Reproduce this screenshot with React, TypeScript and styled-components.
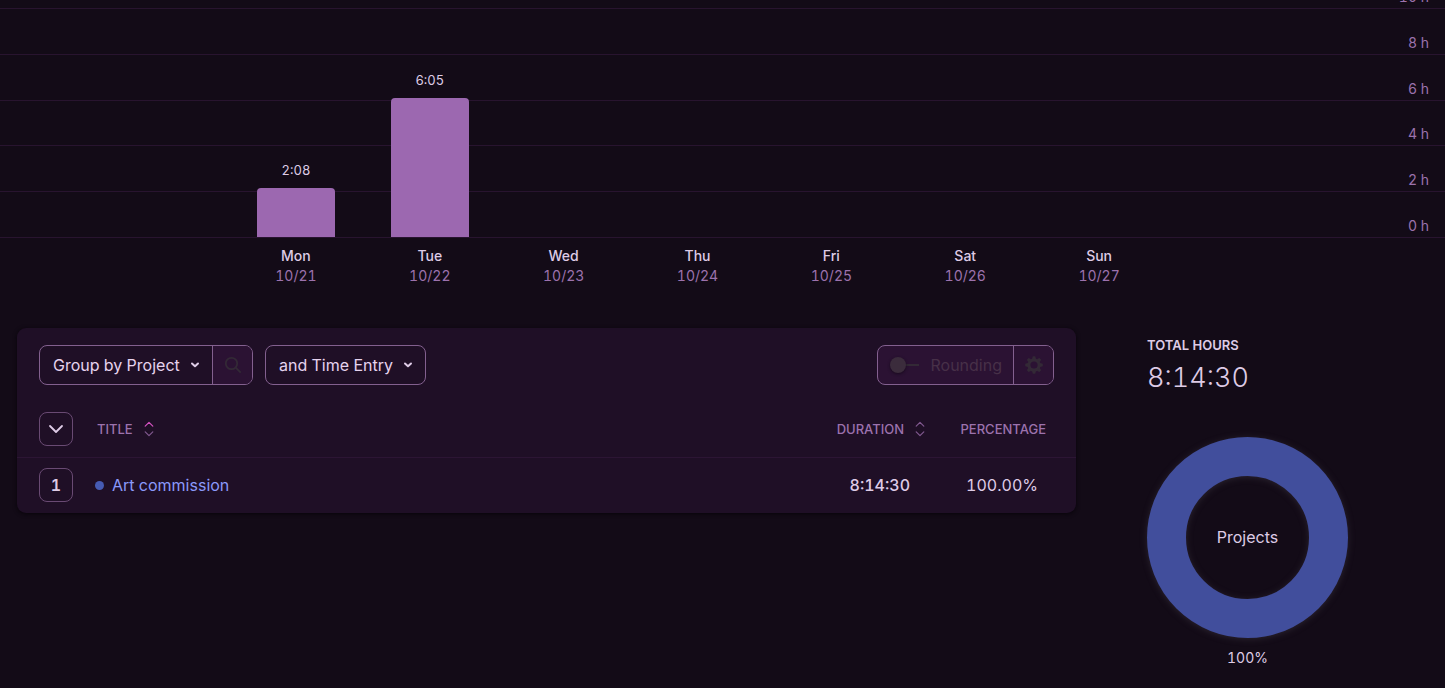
import React from "react";
import styled, { createGlobalStyle } from "styled-components";

const Global = createGlobalStyle`
  *, *::before, *::after { box-sizing: border-box; }
  body {
    margin: 0;
    background: #130b17;
    color: #decbe6;
    font-family: Inter, "Liberation Sans", sans-serif;
    font-size: 16px;
    line-height: 20px;
    font-feature-settings: "tnum";
  }
  button, select { font: inherit; color: inherit; margin: 0; }
`;

const Page = styled.div`
  overflow-x: hidden;
`;

const Chart = styled.section`
  position: relative;
  height: 238px;
  overflow: hidden;
`;

const Grid = styled.div`
  height: 100%;
  display: flex;
  flex-direction: column;
`;

const GridRow = styled.div<{ $clipped?: boolean }>`
  flex: ${(p) => (p.$clipped ? "0 0 9px" : "1 1 0")};
  min-height: 0;
  height: ${(p) => (p.$clipped ? "9px" : "auto")};
  display: flex;
  flex-direction: column;
  align-items: flex-end;
  justify-content: flex-end;
  padding: 0 16px 1px 0;
  border-bottom: 1px solid #28142f;
  color: #9c72ad;
  font-size: 14px;
  white-space: nowrap;
`;

const Bars = styled.div`
  position: absolute;
  inset: 9px 0 1px 0;
  display: flex;
  padding: 0 279px 0 229px;
`;

const BarSlot = styled.div`
  flex: 1 1 0;
  display: flex;
  flex-direction: column;
  align-items: center;
  justify-content: flex-end;
  font-size: 13px;
`;

const BarValue = styled.span`
  margin-bottom: 8px;
`;

const Bar = styled.div`
  width: 78px;
  border-radius: 4px 4px 0 0;
  background: #9c68b0;
`;

const Days = styled.div`
  display: flex;
  padding: 8px 279px 0 229px;
  font-size: 14px;
`;

const Day = styled.div`
  flex: 1 1 0;
  text-align: center;
`;

const DayName = styled.div`
  font-weight: 500;
`;

const DayDate = styled.div`
  color: #9c72ad;
`;

const Report = styled.main`
  display: grid;
  grid-template-columns: minmax(0, 1fr) 201px;
  gap: 71px;
  align-items: start;
  padding: 42px 97px 0 17px;
`;

const Card = styled.section`
  border-radius: 9px;
  background: #1f0f26;
  box-shadow: 0 1px 4px #08040a;
`;

const Toolbar = styled.div`
  display: flex;
  gap: 12px;
  padding: 17px 22px 16px;
`;

const Group = styled.div<{ $end?: boolean }>`
  display: flex;
  height: 40px;
  margin-left: ${(p) => (p.$end ? "auto" : "0")};
  border: 1px solid #83608f;
  border-radius: 8px;
  background: ${(p) => (p.$end ? "#2b1233" : "transparent")};
  overflow: hidden;
`;

const SelectWrap = styled.label`
  position: relative;
  display: flex;
  align-items: center;

  svg {
    position: absolute;
    right: 12px;
    pointer-events: none;
  }
`;

const Select = styled.select<{ $width: number }>`
  appearance: none;
  width: ${(p) => p.$width}px;
  height: 100%;
  padding: 0 30px 0 13px;
  border: 0;
  background: transparent;
  color: #e6d3ee;
`;

const IconButton = styled.button`
  display: flex;
  align-items: center;
  justify-content: center;
  width: 40px;
  padding: 0;
  border: 0;
  border-left: 1px solid #83608f;
  background: #2b1233;
  color: #332936;
`;

const RoundingLabel = styled.label`
  display: flex;
  align-items: center;
  gap: 11px;
  padding: 0 11px 0 12px;
  color: #473048;
`;

const Switch = styled.input`
  appearance: none;
  position: relative;
  width: 29px;
  height: 16px;
  margin: 0;
  background: linear-gradient(#332936, #332936) right center / 16px 2px no-repeat;

  &::before {
    content: "";
    display: block;
    width: 16px;
    height: 16px;
    border-radius: 50%;
    background: #3b2c3c;
    box-shadow: 0 1px 3px #180a1d;
  }
`;

const Table = styled.table`
  width: 100%;
  border-collapse: collapse;
  table-layout: fixed;
`;

const Row = styled.tr`
  height: 56px;
  tbody & { border-top: 1px solid #2c1534; }
`;

const HeadCell = styled.th<{ $width?: number; $right?: boolean; $pad?: number; $indent?: boolean }>`
  width: ${(p) => (p.$width ? `${p.$width}px` : "auto")};
  padding: 0 ${(p) => p.$pad ?? 0}px 0 ${(p) => (p.$indent ? 2 : 0)}px;
  color: #9c72ad;
  font-size: 13px;
  font-weight: 500;
  text-align: ${(p) => (p.$right ? "right" : "left")};
`;

const Cell = styled.td<{ $right?: boolean; $pad?: number; $strong?: boolean }>`
  padding: 0 ${(p) => p.$pad ?? 0}px 0 0;
  text-align: ${(p) => (p.$right ? "right" : "left")};
  font-weight: ${(p) => (p.$strong ? 500 : 400)};
`;

const SortButton = styled.button`
  display: inline-flex;
  align-items: center;
  gap: 11px;
  padding: 0;
  border: 0;
  background: none;
  vertical-align: middle;
`;

const SquareButton = styled.button`
  display: flex;
  align-items: center;
  justify-content: center;
  width: 34px;
  height: 34px;
  margin-left: 22px;
  padding: 0;
  border: 1px solid #694a73;
  border-radius: 8px;
  background: transparent;
  color: #decbe6;
  font-size: 16px;
  font-weight: 600;
`;

const ProjectLink = styled.a`
  display: flex;
  align-items: center;
  gap: 8px;
  color: #8b99fa;
  text-decoration: none;

  &::before {
    content: "";
    width: 9px;
    height: 9px;
    border-radius: 50%;
    background: #465bb3;
  }
`;

const Summary = styled.aside`
  padding-top: 7px;
`;

const SummaryTitle = styled.h2`
  margin: 0;
  font-size: 13px;
  font-weight: 600;
`;

const Total = styled.p`
  margin: 5px 0 0;
  font-size: 27px;
  line-height: 36px;
  font-weight: 300;
`;

const Donut = styled.div`
  display: grid;
  place-items: center;
  width: 201px;
  height: 201px;
  margin-top: 41px;

  > * { grid-area: 1 / 1; }
  svg { overflow: visible; filter: drop-shadow(0 1px 3px #2b2430); }
`;

const DonutLabel = styled.span`
  padding-bottom: 2px;
`;

const Share = styled.p`
  margin: 10px 0 0;
  text-align: center;
  font-size: 14px;
`;

const Caret = () => (
  <svg width="10" height="8" viewBox="0 0 10 8" fill="none" stroke="currentColor" strokeWidth="2" strokeLinecap="round" strokeLinejoin="round" aria-hidden="true">
    <path d="M2 2.5 5 5.3 8 2.5" />
  </svg>
);

const SortIcon = ({ active }: { active?: boolean }) => (
  <svg width="10" height="16" viewBox="0 0 10 16" fill="none" strokeWidth="1.2" strokeLinecap="round" strokeLinejoin="round" aria-hidden="true">
    <path d="M1.2 5.2 5 1.4l3.8 3.8" stroke={active ? "#d452c0" : "#80588f"} />
    <path d="M1.2 10.8 5 14.6l3.8-3.8" stroke="#80588f" />
  </svg>
);

const gearTeeth = [0, 45, 90, 135, 180, 225, 270, 315];

const GearIcon = () => (
  <svg width="18" height="18" viewBox="-9 -9 18 18" aria-hidden="true">
    <circle r="5.1" fill="none" stroke="currentColor" strokeWidth="3" />
    {gearTeeth.map((angle) => (
      <path key={angle} d="M-2-6 -1.2-8.8h2.4L2-6z" fill="currentColor" transform={`rotate(${angle})`} />
    ))}
  </svg>
);

const days = [
  { name: "Mon", date: "10/21", hours: 2.13, label: "2:08" },
  { name: "Tue", date: "10/22", hours: 6.08, label: "6:05" },
  { name: "Wed", date: "10/23", hours: 0, label: "" },
  { name: "Thu", date: "10/24", hours: 0, label: "" },
  { name: "Fri", date: "10/25", hours: 0, label: "" },
  { name: "Sat", date: "10/26", hours: 0, label: "" },
  { name: "Sun", date: "10/27", hours: 0, label: "" },
];

export default function App() {
  return (
    <Page>
      <Global />
      <Chart aria-label="Hours per day">
        <Grid>
          <GridRow $clipped>10 h</GridRow>
          {[8, 6, 4, 2, 0].map((h) => (
            <GridRow key={h}>{h} h</GridRow>
          ))}
        </Grid>
        <Bars>
          {days.map((d) => (
            <BarSlot key={d.name}>
              {d.hours > 0 && (
                <>
                  <BarValue>{d.label}</BarValue>
                  <Bar style={{ height: `${d.hours * 10}%` }} />
                </>
              )}
            </BarSlot>
          ))}
        </Bars>
      </Chart>
      <Days>
        {days.map((d) => (
          <Day key={d.name}>
            <DayName>{d.name}</DayName>
            <DayDate>{d.date}</DayDate>
          </Day>
        ))}
      </Days>
      <Report>
        <Card>
          <Toolbar>
            <Group>
              <SelectWrap>
                <Select $width={172} aria-label="Group by">
                  <option>Group by Project</option>
                </Select>
                <Caret />
              </SelectWrap>
              <IconButton aria-label="Search" disabled>
                <svg width="18" height="18" viewBox="0 0 18 18" fill="none" stroke="currentColor" strokeWidth="1.8" aria-hidden="true">
                  <circle cx="7.5" cy="7.5" r="5.7" />
                  <path d="m11.7 11.7 5 5" />
                </svg>
              </IconButton>
            </Group>
            <Group>
              <SelectWrap>
                <Select $width={159} aria-label="Then group by">
                  <option>and Time Entry</option>
                </Select>
                <Caret />
              </SelectWrap>
            </Group>
            <Group $end>
              <RoundingLabel>
                <Switch type="checkbox" role="switch" disabled />
                Rounding
              </RoundingLabel>
              <IconButton aria-label="Rounding settings" disabled>
                <GearIcon />
              </IconButton>
            </Group>
          </Toolbar>
          <Table>
            <thead>
              <Row>
                <HeadCell $width={78}>
                  <SquareButton aria-label="Expand all">
                    <svg width="16" height="10" viewBox="0 0 16 10" fill="none" stroke="currentColor" strokeWidth="1.8" strokeLinecap="round" strokeLinejoin="round" aria-hidden="true">
                      <path d="M2 2l6 6 6-6" />
                    </svg>
                  </SquareButton>
                </HeadCell>
                <HeadCell $indent>
                  <SortButton>TITLE <SortIcon active /></SortButton>
                </HeadCell>
                <HeadCell $width={160} $right $pad={12}>
                  <SortButton>DURATION <SortIcon /></SortButton>
                </HeadCell>
                <HeadCell $width={139} $right $pad={30}>PERCENTAGE</HeadCell>
              </Row>
            </thead>
            <tbody>
              <Row>
                <Cell><SquareButton>1</SquareButton></Cell>
                <Cell><ProjectLink href="#art-commission">Art commission</ProjectLink></Cell>
                <Cell $right $pad={27} $strong>8:14:30</Cell>
                <Cell $right $pad={38}>100.00%</Cell>
              </Row>
            </tbody>
          </Table>
        </Card>
        <Summary>
          <SummaryTitle>TOTAL HOURS</SummaryTitle>
          <Total>8:14:30</Total>
          <Donut>
            <svg width="201" height="201" viewBox="0 0 201 201" aria-hidden="true">
              <circle cx="100.5" cy="100.5" r="81" fill="none" stroke="#414e9c" strokeWidth="39" />
            </svg>
            <DonutLabel>Projects</DonutLabel>
          </Donut>
          <Share>100%</Share>
        </Summary>
      </Report>
    </Page>
  );
}
